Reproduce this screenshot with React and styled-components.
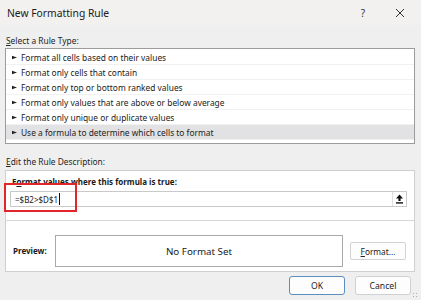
import styled, { createGlobalStyle } from 'styled-components';

const Global = createGlobalStyle`
    body {
        margin: 0;
        background: #efefef;
        font-family: 'Noto Sans', 'Open Sans', sans-serif;
        color: #1b1b1b;
    }
`;

const rules = [
    'Format all cells based on their values',
    'Format only cells that contain',
    'Format only top or bottom ranked values',
    'Format only values that are above or below average',
    'Format only unique or duplicate values',
    'Use a formula to determine which cells to format',
];

export default function App() {
    return (
        <>
            <Global />
            <Dialog>
                <TitleBar>
                    <Title>New Formatting Rule</Title>
                    <HelpButton>?</HelpButton>
                    <CloseButton>
                        <svg width="10" height="10" viewBox="0 0 10 10">
                            <path d="M1 1 L9 9 M9 1 L1 9" stroke="#333" strokeWidth="1" />
                        </svg>
                    </CloseButton>
                </TitleBar>
                <Body>
                    <SectionLabel top={10}><u>S</u>elect a Rule Type:</SectionLabel>
                    <RuleList>
                        {rules.map((r, i) => (
                            <RuleRow key={r} selected={i === rules.length - 1}>
                                <Pointer width="5" height="5" viewBox="0 0 5 5">
                                    <path d="M0 0.8 L5 2.5 L0 4.2 Z" fill="#222" />
                                </Pointer>
                                {r}
                            </RuleRow>
                        ))}
                    </RuleList>
                    <SectionLabel top={12}><u>E</u>dit the Rule Description:</SectionLabel>
                    <DescBox>
                        <FormulaSection>
                            <BoldLabel>F<u>o</u>rmat values where this formula is true:</BoldLabel>
                            <InputRow>
                                <FormulaInput>=$B2&gt;$D$1<Caret /></FormulaInput>
                                <PickButton>
                                    <svg width="9" height="10" viewBox="0 0 9 10">
                                        <path d="M4.5 0.5 L8 4.5 L5.6 4.5 L5.6 7 L3.4 7 L3.4 4.5 L1 4.5 Z" fill="#111" />
                                        <rect x="1" y="8.2" width="7" height="1.4" fill="#111" />
                                    </svg>
                                </PickButton>
                            </InputRow>
                            <Highlight />
                        </FormulaSection>
                        <PreviewSection>
                            <BoldLabel width={42}>Preview:</BoldLabel>
                            <PreviewBox>No Format Set</PreviewBox>
                            <SmallButton><u>F</u>ormat...</SmallButton>
                        </PreviewSection>
                    </DescBox>
                    <Footer>
                        <DialogButton primary>OK</DialogButton>
                        <DialogButton>Cancel</DialogButton>
                    </Footer>
                </Body>
                <Grip />
            </Dialog>
        </>
    );
}

const Dialog = styled.div`
    position: relative;
    width: 421px;
    height: 300px;
    display: flex;
    flex-direction: column;
    background: #efefef;
    overflow: hidden;
`;

const TitleBar = styled.div`
    height: 25px;
    display: flex;
    align-items: center;
    padding-left: 7px;
    background: #f3f1ef;
`;

const Title = styled.div`
    flex: 1;
    font-size: 10.3px;
    color: #1a1a1a;
    padding-top: 1px;
`;

const HelpButton = styled.div`
    width: 12px;
    font-size: 10px;
    color: #333;
    margin-right: 25px;
    text-align: center;
`;

const CloseButton = styled.div`
    width: 12px;
    margin-right: 15px;
    display: flex;
    align-items: center;
    justify-content: center;
`;

const Body = styled.div`
    display: flex;
    flex-direction: column;
    padding: 0 6px 0 5px;
`;

const SectionLabel = styled.div`
    font-size: 8.4px;
    line-height: 12px;
    color: #262626;
    margin-top: ${p => p.top}px;
    margin-bottom: 1px;
    padding-left: 1px;
`;

const RuleList = styled.div`
    height: 93px;
    border: 1px solid #9c9c9c;
    background: #fff;
    padding-top: 1px;
`;

const RuleRow = styled.div`
    height: 14px;
    display: flex;
    align-items: center;
    padding-left: 6px;
    font-size: 8.4px;
    color: #222;
    border-bottom: 1px solid #f1f1f1;
    background: ${p => (p.selected ? '#e2e2e4' : '#fff')};
`;

const Pointer = styled.svg`
    margin-right: 4px;
    flex-shrink: 0;
`;

const DescBox = styled.div`
    margin-top: 1px;
    border: 1px solid #cfcfcf;
    background: #fff;
    display: flex;
    flex-direction: column;
`;

const FormulaSection = styled.div`
    position: relative;
    padding: 5px 7px 13px 4px;
    display: flex;
    flex-direction: column;
    gap: 3px;
`;

const BoldLabel = styled.div`
    font-size: 8px;
    font-weight: 700;
    line-height: 12px;
    padding-left: 2px;
    color: #1a1a1a;
    white-space: nowrap;
    ${p => (p.width ? `width: ${p.width}px; flex-shrink: 0;` : '')}
`;

const InputRow = styled.div`
    height: 14px;
    display: flex;
    align-items: center;
    border: 1px solid #c9c9c9;
    background: #fff;
`;

const FormulaInput = styled.div`
    flex: 1;
    font-size: 8px;
    padding-left: 4px;
    display: flex;
    align-items: center;
    color: #1a1a1a;
`;

const Caret = styled.span`
    width: 1px;
    height: 12px;
    background: #111;
    margin-left: 1px;
`;

const PickButton = styled.div`
    width: 13px;
    height: 14px;
    display: flex;
    align-items: center;
    justify-content: center;
    border-left: 1px solid #e0e0e0;
`;

const Highlight = styled.div`
    position: absolute;
    left: -2px;
    top: 12px;
    width: 69px;
    height: 25px;
    border: 2px solid #e0262b;
`;

const PreviewSection = styled.div`
    border-top: 1px solid #d6d6d6;
    padding: 14px 8px 4px 5px;
    display: flex;
    align-items: center;
`;

const PreviewBox = styled.div`
    width: 286px;
    height: 30px;
    border: 1px solid #a9a9a9;
    display: flex;
    align-items: center;
    justify-content: center;
    font-size: 9.8px;
    color: #1a1a1a;
`;

const SmallButton = styled.div`
    margin-left: auto;
    width: 54px;
    height: 16px;
    border: 1px solid #d2d2d2;
    border-radius: 2px;
    background: #fdfdfd;
    display: flex;
    align-items: center;
    justify-content: center;
    font-size: 8.3px;
    color: #222;
`;

const Footer = styled.div`
    display: flex;
    justify-content: flex-end;
    gap: 10px;
    margin-top: 4px;
    padding-right: 4px;
`;

const DialogButton = styled.div`
    width: 54px;
    height: 17px;
    border: 1px solid ${p => (p.primary ? '#5a8fc0' : '#d0d0d0')};
    border-radius: 3px;
    background: #fdfdfd;
    display: flex;
    align-items: center;
    justify-content: center;
    font-size: 8.6px;
    color: #222;
`;

const Grip = styled.div`
    position: absolute;
    right: 3px;
    bottom: 2px;
    width: 6px;
    height: 6px;
    background-image: radial-gradient(circle, #aaa 0.6px, transparent 0.8px);
    background-size: 3px 3px;
`;
